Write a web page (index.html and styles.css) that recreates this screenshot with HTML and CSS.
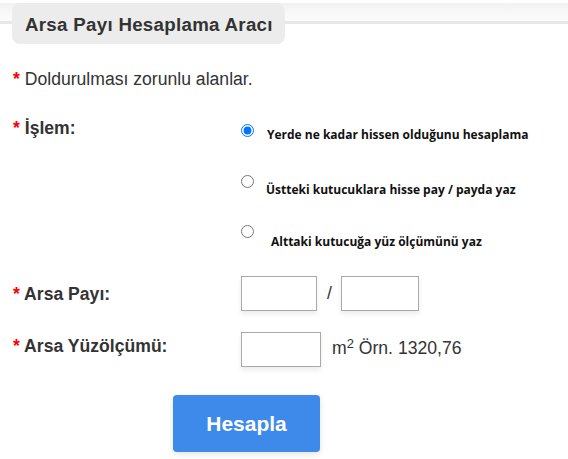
FILE: index.html
```html
<!DOCTYPE html>
<html lang="tr">
<head>
<meta charset="utf-8">
<title>Arsa Payı Hesaplama Aracı</title>
<link rel="stylesheet" href="styles.css">
</head>
<body>
<div class="header">
  <div class="tab">Arsa Payı Hesaplama Aracı</div>
</div>
<div class="form">
  <p class="note"><span class="req">*</span> Doldurulması zorunlu alanlar.</p>
  <div class="row row-op">
    <div class="label"><span class="req">*</span> İşlem:</div>
    <div class="options">
      <label class="opt opt1"><input type="radio" name="islem" checked><span>Yerde ne kadar hissen olduğunu hesaplama</span></label>
      <label class="opt opt2"><input type="radio" name="islem"><span>Üstteki kutucuklara hisse pay / payda yaz</span></label>
      <label class="opt opt3"><input type="radio" name="islem"><span>Alttaki kutucuğa yüz ölçümünü yaz</span></label>
    </div>
  </div>
  <div class="row row-pay">
    <div class="label"><span class="req">*</span> Arsa Payı:</div>
    <div class="fields">
      <input class="box" type="text">
      <span class="slash">/</span>
      <input class="box box-b" type="text">
    </div>
  </div>
  <div class="row row-area">
    <div class="label"><span class="req">*</span> Arsa Yüzölçümü:</div>
    <div class="fields">
      <input class="box box-wide" type="text">
      <span class="unit">m<sup>2</sup> Örn. 1320,76</span>
    </div>
  </div>
  <div class="actions">
    <button class="btn" type="button">Hesapla</button>
  </div>
</div>
</body>
</html>
```
FILE: styles.css
```css
html, body {
  margin: 0;
  padding: 0;
  background: #fff;
}
body {
  font-family: "Liberation Sans", Arial, sans-serif;
  color: #333;
  width: 568px;
  height: 459px;
  overflow: hidden;
}
.header {
  height: 44px;
  padding-top: 3px;
  box-sizing: border-box;
  background: linear-gradient(to bottom,
    transparent 0, transparent 3px,
    #f2f2f2 3px, #fcfcfc 21px,
    #e8e8e8 21px, #e8e8e8 24px,
    transparent 24px);
}
.tab {
  margin-left: 12px;
  width: 273px;
  height: 41px;
  box-sizing: border-box;
  background: #ececec;
  border-radius: 8px;
  font-weight: bold;
  font-size: 18.7px;
  letter-spacing: 0.3px;
  color: #333;
  padding-left: 13px;
  line-height: 43px;
}
.form {
  padding-left: 13px;
}
.req {
  color: #f00;
  font-weight: bold;
}
.note {
  margin: 24px 0 0 0;
  font-size: 17.6px;
  line-height: 22px;
}
.row {
  display: flex;
}
.label {
  width: 228px;
  flex: none;
  font-weight: bold;
  font-size: 17.6px;
  line-height: 20px;
}
.row-op {
  margin-top: 28px;
}
.options {
  display: flex;
  flex-direction: column;
  padding-top: 2px;
  font-family: "Open Sans", "Noto Sans", sans-serif;
  font-weight: bold;
  font-size: 12px;
  color: #111;
}
.opt {
  display: flex;
  align-items: flex-start;
}
.opt input {
  margin: 4px 0 0 0;
  width: 13px;
  height: 13px;
  flex: none;
}
.opt span {
  line-height: 18px;
}
.opt1 span { margin: 6px 0 0 13px; }
.opt2 { margin-top: 27px; }
.opt2 span { margin: 10px 0 0 12px; }
.opt3 { margin-top: 22px; }
.opt3 span { margin: 12px 0 0 17px; }
.row-pay {
  margin-top: 25px;
  align-items: flex-start;
}
.row-pay .label { margin-top: 8px; }
.fields {
  display: flex;
  align-items: center;
}
.box {
  width: 76px;
  height: 35px;
  box-sizing: border-box;
  border: 1px solid #aaa;
  margin: 0;
  padding: 0;
  box-shadow: 0 3px 5px rgba(0, 0, 0, 0.08);
  background: #fff;
}
.box-b { width: 78px; }
.box-wide { width: 80px; }
.slash {
  font-size: 17.6px;
  margin: 0 9px 0 10px;
  color: #333;
}
.row-area {
  margin-top: 21px;
  align-items: flex-start;
}
.row-area .label { margin-top: 4px; }
.unit {
  font-size: 17.6px;
  margin-left: 11px;
  align-self: flex-start;
  line-height: 20px;
  padding-top: 6px;
}
.unit sup {
  font-size: 13px;
  vertical-align: 6px;
  line-height: 0;
}
.actions {
  margin-top: 28px;
  padding-left: 160px;
}
.btn {
  width: 147px;
  height: 57px;
  border: none;
  border-radius: 4px;
  background: #3d8aea;
  color: #fff;
  font-family: "Liberation Sans", Arial, sans-serif;
  font-weight: bold;
  font-size: 21px;
  box-shadow: 0 2px 6px rgba(0, 0, 0, 0.12);
  padding: 0;
}
```
